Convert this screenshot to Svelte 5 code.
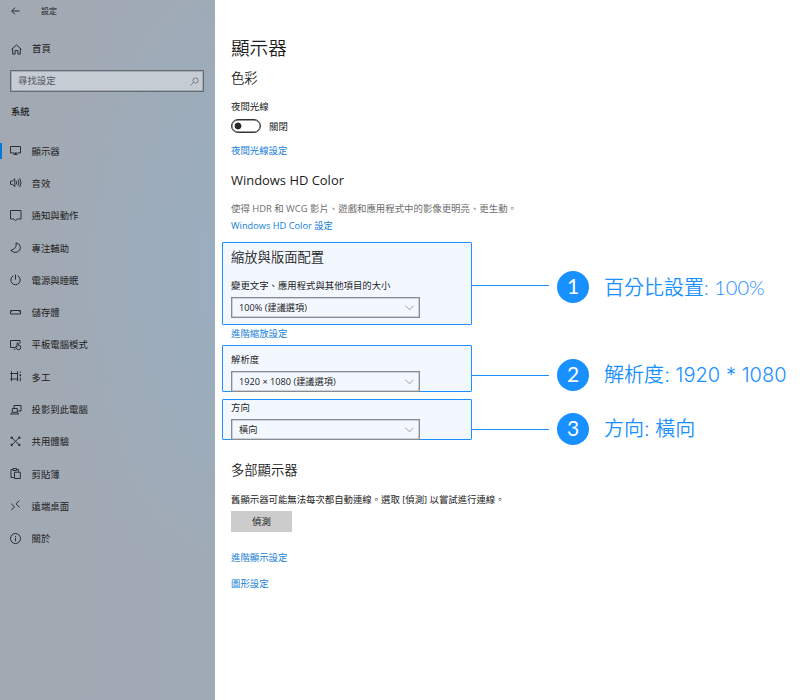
<script>
  const nav = [
    { icon: 'display', label: '顯示器', active: true },
    { icon: 'sound', label: '音效' },
    { icon: 'notify', label: '通知與動作' },
    { icon: 'focus', label: '專注輔助' },
    { icon: 'power', label: '電源與睡眠' },
    { icon: 'storage', label: '儲存體' },
    { icon: 'tablet', label: '平板電腦模式' },
    { icon: 'multitask', label: '多工' },
    { icon: 'project', label: '投影到此電腦' },
    { icon: 'shared', label: '共用體驗' },
    { icon: 'clipboard', label: '剪貼簿' },
    { icon: 'remote', label: '遠端桌面' },
    { icon: 'about', label: '關於' }
  ];

  const icons = {
    display: 'M.5 1.5h10v6.500h-10zM5.5 8v2M3.5 9.5h4',
    sound: 'M.5 4.2h1.8L4.8 1.8v7.9L2.3 7.3H.5zM6.3 4q1 1.7 0 3.5M8 2.7q2 3 0 6M9.7 1.3q2.6 4.4 0 8.8',
    notify: 'M.5 .5h10.500v8.500H7.300L5.600 10.600 3.900 9H.5z',
    focus: 'M6 .8Q7.400 6.500 .8 8.400 3.500 11.200 7 10.200 10.600 8.800 10.500 5.200 10.100 1.700 6 .8z',
    power: 'M5.500 .6v5M3.400 1.800A4.700 4.700 0 1 0 7.600 1.800',
    storage: 'M.6 3.500h9.900v3.500H.6zM1.800 3.500v1.200M9.300 3.500v1.200',
    tablet: 'M5 8.500H.5v-7h9.500v3M3.800 10.300h1.500M7 7.500V4.200q.7-1 1.300 0v2.200q2.500-.2 2.500 1.600 0 2.800-2.400 2.800-1.700 0-3-2.900.5-1 1.600 0z',
    multitask: 'M1.500 .3v9.900M7.500 .3v9.900M.3 2.500h8M.3 8h8M10.300 .5v1.300M10.300 3v2.500M9.700 4.300h1.400M10.300 6.500v3.700',
    project: 'M4 4V1.500h7v5.500H7.500M2.300 4.500h5v3.800h-5zM2.300 8.300L.5 10h8.300L7.300 8.300',
    shared: 'M2.500 2.300l6 6M8.500 2.300l-6 6M1 1h1.400v1.400H1zM8.600 1H10v1.400H8.600zM1 8.200h1.400v1.400H1zM8.600 8.200H10v1.400H8.600z',
    clipboard: 'M3.800 9.500H1v-8h2M6.500 1.500h2v2.300M3 .5h3.500v2H3zM4.500 4.200h5.800v6.300H4.500z',
    remote: 'M1.300 3.800L4.600 6.900 1.300 10M9.300 .5L6 3.900 9.600 7.400',
    about: 'M5.500 .5a5 5 0 1 0 0 10 5 5 0 0 0 0-10zM5.500 4.800v3.400M5.500 2.900v1'
  };
</script>

{#snippet select(value)}
  <div class="select">
    <span>{value}</span>
    <svg width="9" height="6" viewBox="0 0 9 6"><path d="M.5 .8L4.500 4.800 8.500 .8" /></svg>
  </div>
{/snippet}

{#snippet note(n, text)}
  <div class="note n{n}">
    <i class="line"></i>
    <b class="badge">{n}</b>
    <span class="caption">{text}</span>
  </div>
{/snippet}

<div class="window">
  <aside>
    <header>
      <svg class="back" width="9" height="8" viewBox="0 0 9 8"><path d="M8.500 4H.8M4 .6L.7 4 4 7.400" /></svg>
      <span>設定</span>
    </header>
    <div class="home">
      <svg width="11" height="11" viewBox="0 0 11 11"><path d="M.6 5.300L5.500 .9l4.900 4.400M1.700 4.500v5.600h2.400V6.500h2.800v3.600h2.400V4.500" /></svg>
      <span>首頁</span>
    </div>
    <div class="search">
      <span>尋找設定</span>
      <svg width="9" height="9" viewBox="0 0 9 9"><circle cx="5.500" cy="3.500" r="2.600" /><path d="M3.500 5.500L.5 8.500" /></svg>
    </div>
    <h4>系統</h4>
    <nav>
      {#each nav as item}
        <div class="item" class:active={item.active}>
          <svg width="12" height="12" viewBox="0 0 12 12"><path d={icons[item.icon]} /></svg>
          <span>{item.label}</span>
        </div>
      {/each}
    </nav>
  </aside>

  <main>
    <h1>顯示器</h1>
    <h2 class="color">色彩</h2>
    <p class="night">夜間光線</p>
    <div class="toggle-row"><i class="toggle"></i><span>關閉</span></div>
    <p class="link night-link">夜間光線設定</p>
    <h2 class="hd">Windows HD Color</h2>
    <p class="desc">使得 HDR 和 WCG 影片、遊戲和應用程式中的影像更明亮、更生動。</p>
    <p class="link hd-link">Windows HD Color 設定</p>

    <section class="scale">
      <div class="box">
        <h2>縮放與版面配置</h2>
        <p>變更文字、應用程式與其他項目的大小</p>
        {@render select('100% (建議選項)')}
      </div>
      {@render note(1, '百分比設置: 100%')}
    </section>
    <p class="link">進階縮放設定</p>
    <section class="resolution">
      <div class="box">
        <p>解析度</p>
        {@render select('1920 × 1080 (建議選項)')}
      </div>
      {@render note(2, '解析度: 1920 * 1080')}
    </section>
    <section class="direction">
      <div class="box">
        <p>方向</p>
        {@render select('橫向')}
      </div>
      {@render note(3, '方向: 橫向')}
    </section>

    <h2 class="multi">多部顯示器</h2>
    <p class="old">舊顯示器可能無法每次都自動連線。選取 [偵測] 以嘗試進行連線。</p>
    <button>偵測</button>
    <p class="link advanced">進階顯示設定</p>
    <p class="link graphics">圖形設定</p>
  </main>
</div>

<style>
  :global(body) { background: #fff; }
  .window {
    display: flex;
    width: 807px;
    height: 700px;
    overflow: hidden;
    font: 9.38px/17px 'Open Sans', 'Noto Sans CJK TC', sans-serif;
    color: #1c1c1c;
    white-space: nowrap;
  }
  svg { flex: none; overflow: visible; fill: none; stroke: #2b2f34; stroke-width: 1; }
  h1, h2, h4, p { margin: 0; font-weight: 400; }

  aside {
    flex: none;
    width: 215px;
    background:
      radial-gradient(ellipse 190px 330px at 235px 270px, #99afc1 0%, rgba(153, 175, 193, 0) 100%),
      linear-gradient(90deg, #a2a9b3 0%, #a0aab5 100%);
  }
  header { display: flex; align-items: center; height: 22px; padding-left: 11px; font-size: 8px; line-height: 16px; }
  header span { margin-left: 21px; }
  .home { display: flex; align-items: center; height: 16px; margin-top: 19px; padding-left: 11px; line-height: 16px; }
  .home span { margin-left: 10px; }
  .search {
    display: flex;
    align-items: center;
    justify-content: space-between;
    box-sizing: border-box;
    width: 194px;
    height: 22px;
    margin: 13px 0 0 10px;
    padding: 0 4px 0 7px;
    border: 1px solid #656b72;
    box-shadow: inset 0 0 0 1px rgba(90, 96, 104, .3);
    background: #c6ccd4;
    color: #53585f;
    line-height: 16px;
  }
  .search svg { stroke: #656a70; stroke-width: .8; }
  h4 { margin: 12px 0 0 11px; height: 16px; font-size: 9.35px; line-height: 16px; font-weight: 500; }
  nav { margin-top: 15px; }
  .item { display: flex; align-items: center; height: 32.3px; padding-left: 10px; }
  .item span { margin-left: 9.500px; }
  .active { background: linear-gradient(#0078d7, #0078d7) 0 50% / 2px 16px no-repeat; }

  main { flex: 1; min-width: 0; padding: 36px 0 0 16px; }
  h1 { height: 24px; font-size: 18.600px; line-height: 23px; font-weight: 350; }
  h2 { height: 16px; font-size: 13.300px; line-height: 16px; font-weight: 350; }
  p { height: 16px; line-height: 18px; }
  .link { color: #1480d8; }
  .color { margin-top: 10px; }
  .night { margin-top: 12px; }
  .toggle-row { display: flex; align-items: center; height: 16px; margin-top: 4px; line-height: 18px; }
  .toggle-row span { padding-top: 1px; }
  .toggle {
    box-sizing: border-box;
    width: 30px;
    height: 14px;
    margin-right: 8px;
    border: 1px solid #333;
    box-shadow: inset 0 0 0 .4px #333;
    border-radius: 7px;
    background: radial-gradient(circle at 6px 50%, #2a2a2a 3px, transparent 3.800px);
  }
  .night-link { margin-top: 8px; }
  .hd { margin-top: 14px; font-weight: 400; font-size: 12.950px; line-height: 17px; }
  .desc { margin-top: 12px; color: #6d6d6d; font-size: 9.420px; }
  .hd-link { margin-top: 1px; font-size: 9.250px; }

  section { display: flex; align-items: flex-start; margin-left: -9px; }
  .box { box-sizing: border-box; flex: none; width: 250px; height: 100%; padding-left: 8px; border: 1px solid #1e90ff; border-radius: 1px; background: #f3f8ff; }
  .scale { height: 83px; margin-top: 9px; }
  .scale h2 { margin-top: 6px; }
  .scale p { margin: 12px 0 4px; }
  .resolution { height: 47px; margin-top: 4px; }
  .resolution p { margin: 5px 0 4px; }
  .direction { height: 41px; margin-top: 7px; }
  .direction p { margin: 0 0 3px; line-height: 16px; }
  .select {
    display: flex;
    align-items: center;
    justify-content: space-between;
    box-sizing: border-box;
    width: 189px;
    height: 21px;
    padding: 0 5px 0 7px;
    border: 1px solid #858c93;
    box-shadow: inset 0 0 0 .5px #a5abb1;
    font-size: 9.200px;
  }
  .select svg { stroke: #858a90; stroke-width: .8; }

  .note { display: flex; align-items: center; height: 32px; margin-top: 14px; color: #1890ff; }
  .n1 { margin-top: 29px; }
  .line { width: 77px; height: 1px; background: #1890ff; }
  .n1 .line { margin-top: -3px; }
  .badge {
    width: 32px;
    height: 32px;
    margin: 0 15px 0 8px;
    border-radius: 50%;
    background: #1890ff;
    color: #fff;
    font: 400 21px/30px Lato, sans-serif;
    text-align: center;
  }
  .caption { font: 350 20px/31px Inter, 'Noto Sans CJK TC', sans-serif; }
  .n1 .caption { font-family: Lato, 'Noto Sans CJK TC', sans-serif; line-height: 28px; }
  .n2 .caption { letter-spacing: .05px; }

  .multi { margin-top: 22px; line-height: 17px; }
  .old { margin-top: 13px; }
  button {
    display: block;
    width: 61px;
    height: 21px;
    margin-top: 4px;
    padding: 0;
    border: 0;
    background: #ccc;
    color: inherit;
    font: inherit;
  }
  .advanced { margin-top: 17px; }
  .graphics { margin-top: 10px; }
</style>
